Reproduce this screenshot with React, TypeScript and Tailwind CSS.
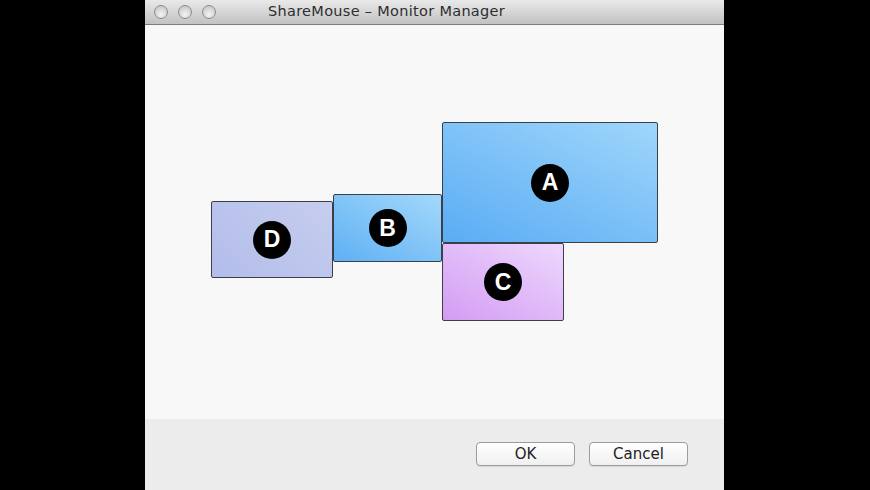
const monitors = [
  { id: "D", left: 66, top: 176, w: 122, h: 77, bg: "bg-[linear-gradient(45deg,#b2bdea,#c6cdee)]" },
  { id: "B", left: 188, top: 169, w: 109, h: 68, bg: "bg-[linear-gradient(30deg,#5fb0f4,#a3d8fb)]" },
  { id: "A", left: 297, top: 97, w: 216, h: 121, bg: "bg-[linear-gradient(25deg,#5aacf4,#9fd6fb)]" },
  { id: "C", left: 297, top: 218, w: 122, h: 78, bg: "bg-[linear-gradient(30deg,#d39cf3,#eed8fd)]" },
];

function Light() {
  return <div className="w-[14px] h-[14px] rounded-full border border-[#8c8c8c] bg-[radial-gradient(circle_at_50%_70%,#f4f4f4,#bdbdbd)]" />;
}

export default function App() {
  return (
    <div className="w-[870px] h-[490px] bg-black flex font-['Liberation_Sans',sans-serif]">
      <div className="ml-[145px] w-[579px] h-full flex flex-col bg-[#f8f8f8]">
        {/* title bar */}
        <div className="h-[25px] shrink-0 flex items-center border-b border-[#7c7c7c] bg-[linear-gradient(#e9e9e9,#c2c2c2)]">
          <div className="flex gap-[10px] ml-[9px]">
            <Light />
            <Light />
            <Light />
          </div>
          <div className="ml-[52px] text-[14.5px] text-[#2e2e2e] font-['DejaVu_Sans',sans-serif] tracking-[0.3px]">
            ShareMouse – Monitor Manager
          </div>
        </div>

        {/* monitor canvas */}
        <div className="relative flex-1">
          {monitors.map((m) => (
            <div
              key={m.id}
              className={`absolute border border-[#3a3f48] rounded-[2px] flex items-center justify-center ${m.bg}`}
              style={{ left: m.left, top: m.top, width: m.w, height: m.h }}
            >
              <div className="w-[38px] h-[38px] rounded-full bg-black flex items-center justify-center text-white font-bold text-[23px] leading-none">
                {m.id}
              </div>
            </div>
          ))}
        </div>

        {/* bottom bar */}
        <div className="h-[71px] shrink-0 bg-[#ececec] flex items-center justify-end gap-[14px] pr-[36px] pb-[1px]">
          <button className="w-[99px] h-[24px] rounded-[4px] border border-[#9c9c9c] bg-[linear-gradient(#ffffff,#f0f0f0)] text-[15px] text-[#222] font-['DejaVu_Sans',sans-serif] shadow-[0_1px_0_rgba(0,0,0,0.08)]">
            OK
          </button>
          <button className="w-[99px] h-[24px] rounded-[4px] border border-[#9c9c9c] bg-[linear-gradient(#ffffff,#f0f0f0)] text-[15px] text-[#222] font-['DejaVu_Sans',sans-serif] shadow-[0_1px_0_rgba(0,0,0,0.08)]">
            Cancel
          </button>
        </div>
      </div>
    </div>
  );
}
